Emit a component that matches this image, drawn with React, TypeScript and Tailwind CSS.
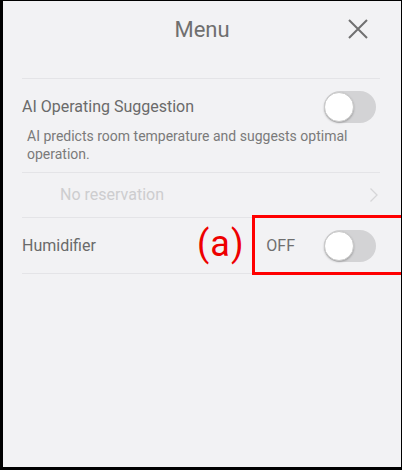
import React from "react";

function Toggle() {
  return (
    <div className="relative w-[52px] h-[32px] rounded-full bg-[#d3d3d5] shrink-0">
      <div className="absolute left-0 top-[1px] w-[30px] h-[30px] rounded-full bg-white border border-[#c9c9c9] shadow-[0_1px_2px_rgba(0,0,0,0.25)]" />
    </div>
  );
}

export default function App() {
  return (
    <div
      className="relative w-[402px] h-[470px] bg-[#f2f2f4] border-black border-l-[3px] border-t border-r-[1px] border-b-[3px] overflow-hidden"
      style={{ fontFamily: "Roboto, 'Liberation Sans', sans-serif" }}
    >
      <div className="relative h-[77px]">
        <div className="h-[56px] flex items-center justify-center text-[22px] text-[#6f6f6f]">
          Menu
        </div>
        <svg
          className="absolute left-[345px] top-[18px]"
          width="20"
          height="20"
          viewBox="0 0 20 20"
          fill="none"
          stroke="#707070"
          strokeWidth="2"
        >
          <path d="M1 1 L19 19 M19 1 L1 19" />
        </svg>
      </div>

      <div className="ml-[19px] mr-[21px] border-t border-[#e4e4e7]">
        <div className="pt-[12px] pb-[9px] border-b border-[#e4e4e7]">
          <div className="flex items-center justify-between pr-[4px]">
            <span className="text-[16px] text-[#6a6a6a]">AI Operating Suggestion</span>
            <Toggle />
          </div>
          <p className="mt-[4px] pl-[5px] pr-[10px] text-[14px] leading-[18px] text-[#7a7a7a]">
            AI predicts room temperature and suggests optimal operation.
          </p>
        </div>

        <div className="h-[45px] flex items-center justify-between border-b border-[#e4e4e7] pl-[38px] pr-[1px]">
          <span className="text-[16px] text-[#cdcdcf]">No reservation</span>
          <svg width="10" height="16" viewBox="0 0 10 16" fill="none" stroke="#d6d6d8" strokeWidth="1.3">
            <path d="M1.5 1.5 L8 8 L1.5 14.5" />
          </svg>
        </div>

        <div className="h-[56px] flex items-center border-b border-[#e4e4e7] pr-[4px]">
          <span className="flex-1 text-[16px] text-[#6a6a6a]">Humidifier</span>
          <span className="text-[16px] text-[#6f6f6f] mr-[29px]">OFF</span>
          <Toggle />
        </div>
      </div>

      <div
        className="absolute left-[194px] top-[223px] text-[36px] leading-[40px] text-[#ee0000] tracking-[1px]"
        style={{ fontFamily: "Roboto, 'Liberation Sans', Arial, sans-serif" }}
      >
        (a)
      </div>
      <div className="absolute left-[249px] top-[214px] w-[152px] h-[60px] border-[3px] border-[#ff0000]" />
    </div>
  );
}
